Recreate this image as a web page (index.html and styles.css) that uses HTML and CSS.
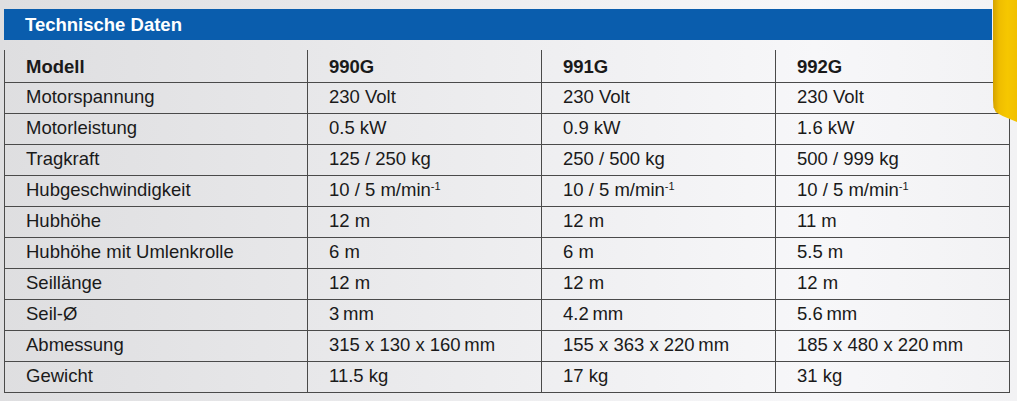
FILE: index.html
```html
<!DOCTYPE html>
<html lang="de">
<head>
    <meta charset="UTF-8">
    <title>Technische Daten</title>
    <link rel="stylesheet" href="styles.css">
</head>
<body>
    <div id="sheet">
        <div class="title">Technische Daten</div>
        <table class="specs">
            <colgroup>
                <col class="c-label">
                <col class="c-val">
                <col class="c-val">
                <col class="c-val">
            </colgroup>
            <tr class="head">
                <th>Modell</th><th>990G</th><th>991G</th><th>992G</th>
            </tr>
            <tr><td>Motorspannung</td><td>230 Volt</td><td>230 Volt</td><td>230 Volt</td></tr>
            <tr><td>Motorleistung</td><td>0.5 kW</td><td>0.9 kW</td><td>1.6 kW</td></tr>
            <tr><td>Tragkraft</td><td>125 / 250 kg</td><td>250 / 500 kg</td><td>500 / 999 kg</td></tr>
            <tr><td>Hubgeschwindigkeit</td><td>10 / 5 m/min<sup>-1</sup></td><td>10 / 5 m/min<sup>-1</sup></td><td>10 / 5 m/min<sup>-1</sup></td></tr>
            <tr><td>Hubhöhe</td><td>12 m</td><td>12 m</td><td>11 m</td></tr>
            <tr><td>Hubhöhe mit Umlenkrolle</td><td>6 m</td><td>6 m</td><td>5.5 m</td></tr>
            <tr><td>Seillänge</td><td>12 m</td><td>12 m</td><td>12 m</td></tr>
            <tr><td>Seil-Ø</td><td>3&#8239;mm</td><td>4.2&#8239;mm</td><td>5.6&#8239;mm</td></tr>
            <tr><td>Abmessung</td><td>315 x 130 x 160&#8239;mm</td><td>155 x 363 x 220&#8239;mm</td><td>185 x 480 x 220&#8239;mm</td></tr>
            <tr><td>Gewicht</td><td>11.5 kg</td><td>17 kg</td><td>31 kg</td></tr>
        </table>
        <div class="tab-marker"></div>
    </div>
</body>
</html>
```

FILE: styles.css
```css
* {
    box-sizing: border-box;
}

body {
    margin: 0;
    font-family: "Liberation Sans", Arial, sans-serif;
    color: #1a1a1a;
    background: linear-gradient(to right, #dedee0 0%, #ececee 45%, #f7f7f9 80%, #f2f2f4 100%);
    height: 401px;
    overflow: hidden;
}

#sheet {
    position: relative;
    padding: 9px 0 0 4px;
    height: 401px;
}

.title {
    width: 988px;
    height: 31px;
    background: #0a5dad;
    color: #fff;
    font-weight: bold;
    font-size: 18.5px;
    line-height: 31px;
    padding-left: 21px;
    margin-bottom: 10px;
}

.specs {
    border-collapse: collapse;
    table-layout: fixed;
    width: 1005px;
    font-size: 18.5px;
    border-bottom: 1px solid #4a4a4a;
    border-left: 1px solid #4a4a4a;
    border-right: 1px solid #4a4a4a;
}

.c-label {
    width: 303px;
}

.c-val {
    width: 234px;
}

.specs th,
.specs td {
    height: 31px;
    padding: 0 0 1px 21px;
    text-align: left;
    white-space: nowrap;
    border-top: 1px solid #4a4a4a;
    border-left: 1px solid #4a4a4a;
}

.specs th {
    font-weight: bold;
    height: 32px;
    padding-top: 3px;
}

.specs tr.head th {
    border-top: none;
}

.specs sup {
    font-size: 11px;
    vertical-align: 6px;
    line-height: 0;
}

.tab-marker {
    position: absolute;
    top: 0;
    left: 993px;
    width: 24px;
    height: 122px;
    background: linear-gradient(to right, #d4a200 0%, #efbd00 25%, #f6c700 60%, #f1c000 100%);
    clip-path: polygon(0 0, 100% 0, 100% 100%, 40% 95%, 12% 92%, 2% 88%, 0 82%);
}
```
